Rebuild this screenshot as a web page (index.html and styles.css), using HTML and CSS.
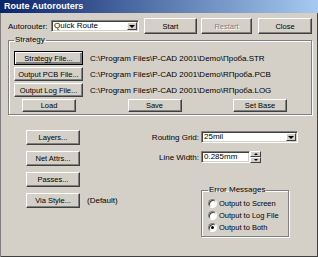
FILE: index.html
```html
<!DOCTYPE html>
<html lang="en">
<head>
  <meta charset="UTF-8">
  <title>Route Autorouters</title>
  <link rel="stylesheet" href="styles.css">
</head>
<body>

  <div class="dialog">
    <div class="titlebar">Route Autorouters</div>

    <div class="content">
      <div class="top-row">
        <span class="label">Autorouter:</span>
        <div class="combo combo-router">
          <span class="combo-text">Quick Route</span>
          <span class="combo-btn"><span class="arrow-down"></span></span>
        </div>
        <button class="btn btn-start">Start</button>
        <button class="btn btn-restart" disabled>Restart</button>
        <button class="btn btn-close">Close</button>
      </div>

      <fieldset class="group strategy">
        <legend>Strategy</legend>
        <div class="file-row">
          <button class="btn btn-file btn-default">Strategy File...</button>
          <span class="path">C:\Program Files\P-CAD 2001\Demo\Проба.STR</span>
        </div>
        <div class="file-row">
          <button class="btn btn-file">Output PCB File...</button>
          <span class="path">C:\Program Files\P-CAD 2001\Demo\RПроба.PCB</span>
        </div>
        <div class="file-row">
          <button class="btn btn-file">Output Log File...</button>
          <span class="path">C:\Program Files\P-CAD 2001\Demo\RПроба.LOG</span>
        </div>
        <div class="action-row">
          <button class="btn btn-action">Load</button>
          <button class="btn btn-action">Save</button>
          <button class="btn btn-action">Set Base</button>
        </div>
      </fieldset>

      <div class="lower">
        <div class="left-col">
          <button class="btn btn-side">Layers...</button>
          <button class="btn btn-side">Net Attrs...</button>
          <button class="btn btn-side">Passes...</button>
          <div class="via-row">
            <button class="btn btn-side">Via Style...</button>
            <span class="note">(Default)</span>
          </div>
        </div>

        <div class="right-col">
          <div class="field-row">
            <span class="field-label">Routing Grid:</span>
            <div class="combo combo-grid">
              <span class="combo-text">25mil</span>
              <span class="combo-btn"><span class="arrow-down"></span></span>
            </div>
          </div>
          <div class="field-row line-row">
            <span class="field-label">Line Width:</span>
            <div class="edit">0.285mm</div>
            <div class="spin">
              <span class="spin-btn"><span class="arrow-up-small"></span></span>
              <span class="spin-btn"><span class="arrow-down-small"></span></span>
            </div>
          </div>

          <fieldset class="group errors">
            <legend>Error Messages</legend>
            <div class="radio-row"><span class="radio"></span>Output to Screen</div>
            <div class="radio-row"><span class="radio"></span>Output to Log File</div>
            <div class="radio-row"><span class="radio checked"><span class="dot"></span></span>Output to Both</div>
          </fieldset>
        </div>
      </div>
    </div>
  </div>

</body>
</html>
```

FILE: styles.css
```css
body, html {
  margin: 0;
  padding: 0;
  font-family: 'Liberation Sans', Arial, sans-serif;
  font-size: 8px;
  color: #000;
  background-color: #d4d0c8;
}

.dialog {
  width: 318px;
  height: 257px;
  background-color: #d4d0c8;
  box-shadow: inset 1px 0 0 #808080, inset -1px -1px 0 #404040;
  overflow: hidden;
}

.titlebar {
  height: 13px;
  line-height: 13px;
  padding-left: 4px;
  background: linear-gradient(to right, #0a246a, #a6caf0);
  color: #fff;
  font-weight: bold;
  font-size: 9px;
}

.content {
  padding: 5px 6px 0 8px;
}

/* buttons */
.btn {
  box-sizing: border-box;
  display: flex;
  align-items: center;
  justify-content: center;
  padding: 0;
  font: inherit;
  font-size: 7.5px;
  color: #000;
  white-space: nowrap;
  background-color: #d4d0c8;
  border: 1px solid;
  border-color: #fff #404040 #404040 #fff;
  box-shadow: inset -1px -1px 0 #808080;
}

.btn-default {
  border-color: #000;
  box-shadow: inset 1px 1px 0 #fff, inset -2px -2px 0 #808080;
}

.btn-restart {
  color: #808080;
  text-shadow: 1px 1px 0 #fff;
}

.top-row {
  display: flex;
  align-items: center;
  height: 16px;
}

.label {
  width: 43px;
}

.btn-start { width: 53px; height: 16px; margin-right: 4px; }
.btn-restart { width: 51px; height: 16px; margin-right: 6px; }
.btn-close { width: 54px; height: 16px; }

/* combo boxes and edits */
.combo, .edit {
  box-sizing: border-box;
  height: 12px;
  padding: 1px;
  background-color: #fff;
  border: 1px solid;
  border-color: #808080 #fff #fff #808080;
  box-shadow: inset 1px 1px 0 #404040, inset -1px -1px 0 #d4d0c8;
}

.combo {
  display: flex;
}

.combo-router {
  width: 88px;
  margin-right: 5px;
}

.combo-grid {
  width: 97px;
}

.combo-text {
  flex: 1;
  line-height: 8px;
  padding-left: 1px;
  white-space: nowrap;
}

.combo-btn, .spin-btn {
  box-sizing: border-box;
  display: flex;
  align-items: center;
  justify-content: center;
  background-color: #d4d0c8;
  border: 1px solid;
  border-color: #fff #404040 #404040 #fff;
}

.combo-btn {
  width: 10px;
}

.arrow-down {
  width: 0;
  height: 0;
  border-left: 3px solid transparent;
  border-right: 3px solid transparent;
  border-top: 3px solid #000;
}

.arrow-up-small, .arrow-down-small {
  width: 0;
  height: 0;
  border-left: 2px solid transparent;
  border-right: 2px solid transparent;
}

.arrow-up-small { border-bottom: 2px solid #000; }
.arrow-down-small { border-top: 2px solid #000; }

/* group boxes */
.group {
  box-sizing: border-box;
  min-width: 0;
  margin: 0;
  border: 1px solid #808080;
  box-shadow: 1px 1px 0 #fff, inset 1px 1px 0 #fff;
}

.group legend {
  padding: 0 1px;
  line-height: 10px;
}

.strategy {
  margin-top: 1px;
  padding: 6px 0 2px 5px;
}

.file-row {
  display: flex;
  align-items: center;
  height: 14px;
  margin-bottom: 2px;
}

.btn-file {
  width: 69px;
  height: 14px;
}

.path {
  margin-left: 7px;
  white-space: nowrap;
}

.action-row {
  display: flex;
  justify-content: space-between;
  margin-top: 2px;
  padding: 0 24px 0 8px;
}

.btn-action {
  width: 54px;
  height: 13px;
}

/* lower part */
.lower {
  display: flex;
  margin-top: 15px;
}

.left-col {
  box-sizing: border-box;
  width: 130px;
  padding-left: 18px;
  display: flex;
  flex-direction: column;
  align-items: flex-start;
}

.btn-side {
  width: 54px;
  height: 15px;
  margin-bottom: 6px;
}

.via-row {
  display: flex;
  align-items: flex-start;
}

.note {
  margin-left: 7px;
  line-height: 15px;
}

.right-col {
  flex: 1;
  padding-top: 1px;
}

.field-row {
  display: flex;
  align-items: center;
  height: 12px;
}

.line-row {
  margin-top: 8px;
}

.field-label {
  width: 61px;
  margin-right: 2px;
  text-align: right;
  white-space: nowrap;
}

.edit {
  width: 49px;
  line-height: 8px;
  padding-left: 2px;
}

.spin {
  width: 11px;
  height: 12px;
  display: flex;
  flex-direction: column;
}

.spin-btn {
  height: 6px;
}

.errors {
  width: 88px;
  margin: 22px 0 0 63px;
  padding: 2px 0 3px 6px;
}

.radio-row {
  display: flex;
  align-items: center;
  height: 12px;
  font-size: 7.5px;
  white-space: nowrap;
}

.radio {
  box-sizing: border-box;
  width: 9px;
  height: 9px;
  margin-right: 2px;
  display: flex;
  align-items: center;
  justify-content: center;
  border-radius: 50%;
  background-color: #fff;
  border: 1px solid;
  border-color: #808080 #fff #fff #808080;
  box-shadow: inset 1px 1px 0 #404040;
}

.dot {
  width: 3px;
  height: 3px;
  border-radius: 50%;
  background-color: #000;
}
```
